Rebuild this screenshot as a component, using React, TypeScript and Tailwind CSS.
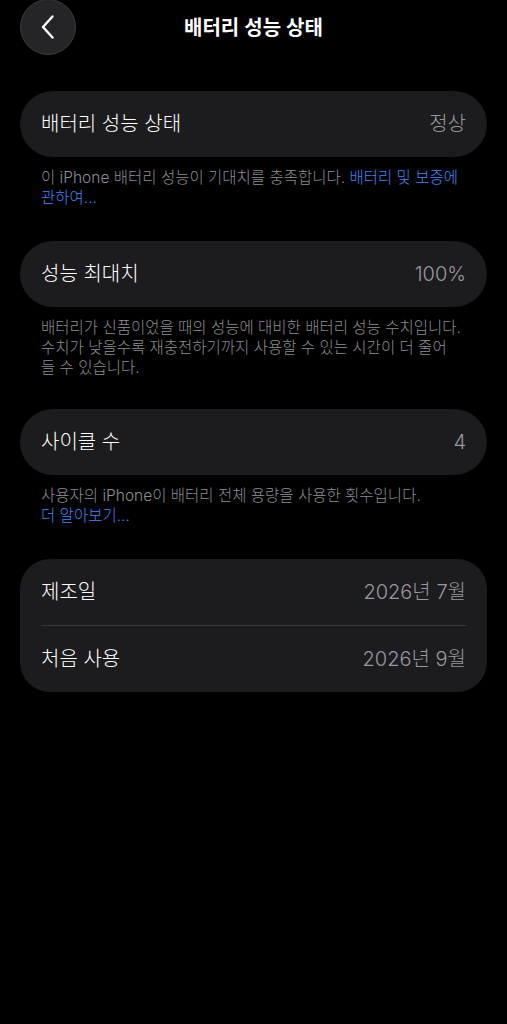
const font = "font-['Inter','Noto_Sans_CJK_KR',sans-serif]";

function Pill({ label, value }: { label: string; value: string }) {
  return (
    <div className="flex h-[66px] items-center justify-between rounded-full bg-[#1c1c1e] pl-[21px] pr-[21px]">
      <span className="text-[20px] font-light text-white">{label}</span>
      <span className="text-[20px] font-light text-[#98989e]">{value}</span>
    </div>
  );
}

function Footer({ children }: { children: React.ReactNode }) {
  return (
    <p className="mt-[11px] px-[21px] text-[15.5px] font-light leading-[20px] text-[#8d8d93]">
      {children}
    </p>
  );
}

export default function App() {
  return (
    <div className={`${font} min-h-[1024px] w-full bg-black px-5`}>
      <header className="relative flex h-[55px] items-center justify-center">
        <button
          type="button"
          aria-label="뒤로"
          className="absolute left-0 top-[-1px] flex h-14 w-14 items-center justify-center rounded-full border border-[#3a3a3c] bg-[#252527]"
        >
          <svg width="16" height="26" viewBox="0 0 16 26" fill="none">
            <path
              d="M12.5 2.5 L3 13 L12.5 23.5"
              stroke="white"
              strokeWidth="2.4"
              strokeLinecap="round"
              strokeLinejoin="round"
            />
          </svg>
        </button>
        <h1 className="text-[20px] font-semibold text-white">배터리 성능 상태</h1>
      </header>

      <div className="mt-9">
        <Pill label="배터리 성능 상태" value="정상" />
        <Footer>
          이 iPhone 배터리 성능이 기대치를 충족합니다.{' '}
          <span className="text-[#3d86f6]">
            배터리 및 보증에
            <br />
            관하여...
          </span>
        </Footer>
      </div>

      <div className="mt-[33px]">
        <Pill label="성능 최대치" value="100%" />
        <Footer>
          배터리가 신품이었을 때의 성능에 대비한 배터리 성능 수치입니다.
          <br />
          수치가 낮을수록 재충전하기까지 사용할 수 있는 시간이 더 줄어
          <br />들 수 있습니다.
        </Footer>
      </div>

      <div className="mt-[31px]">
        <Pill label="사이클 수" value="4" />
        <Footer>
          사용자의 iPhone이 배터리 전체 용량을 사용한 횟수입니다.
          <br />
          <span className="text-[#3d86f6]">더 알아보기...</span>
        </Footer>
      </div>

      <div className="mt-[33px] rounded-[30px] bg-[#1c1c1e] px-[21px]">
        <div className="flex h-[66px] items-center justify-between">
          <span className="text-[20px] font-light text-white">제조일</span>
          <span className="text-[20px] font-light text-[#98989e]">2026년 7월</span>
        </div>
        <div className="h-px bg-[#38383a]" />
        <div className="flex h-[66px] items-center justify-between">
          <span className="text-[20px] font-light text-white">처음 사용</span>
          <span className="text-[20px] font-light text-[#98989e]">2026년 9월</span>
        </div>
      </div>
    </div>
  );
}
